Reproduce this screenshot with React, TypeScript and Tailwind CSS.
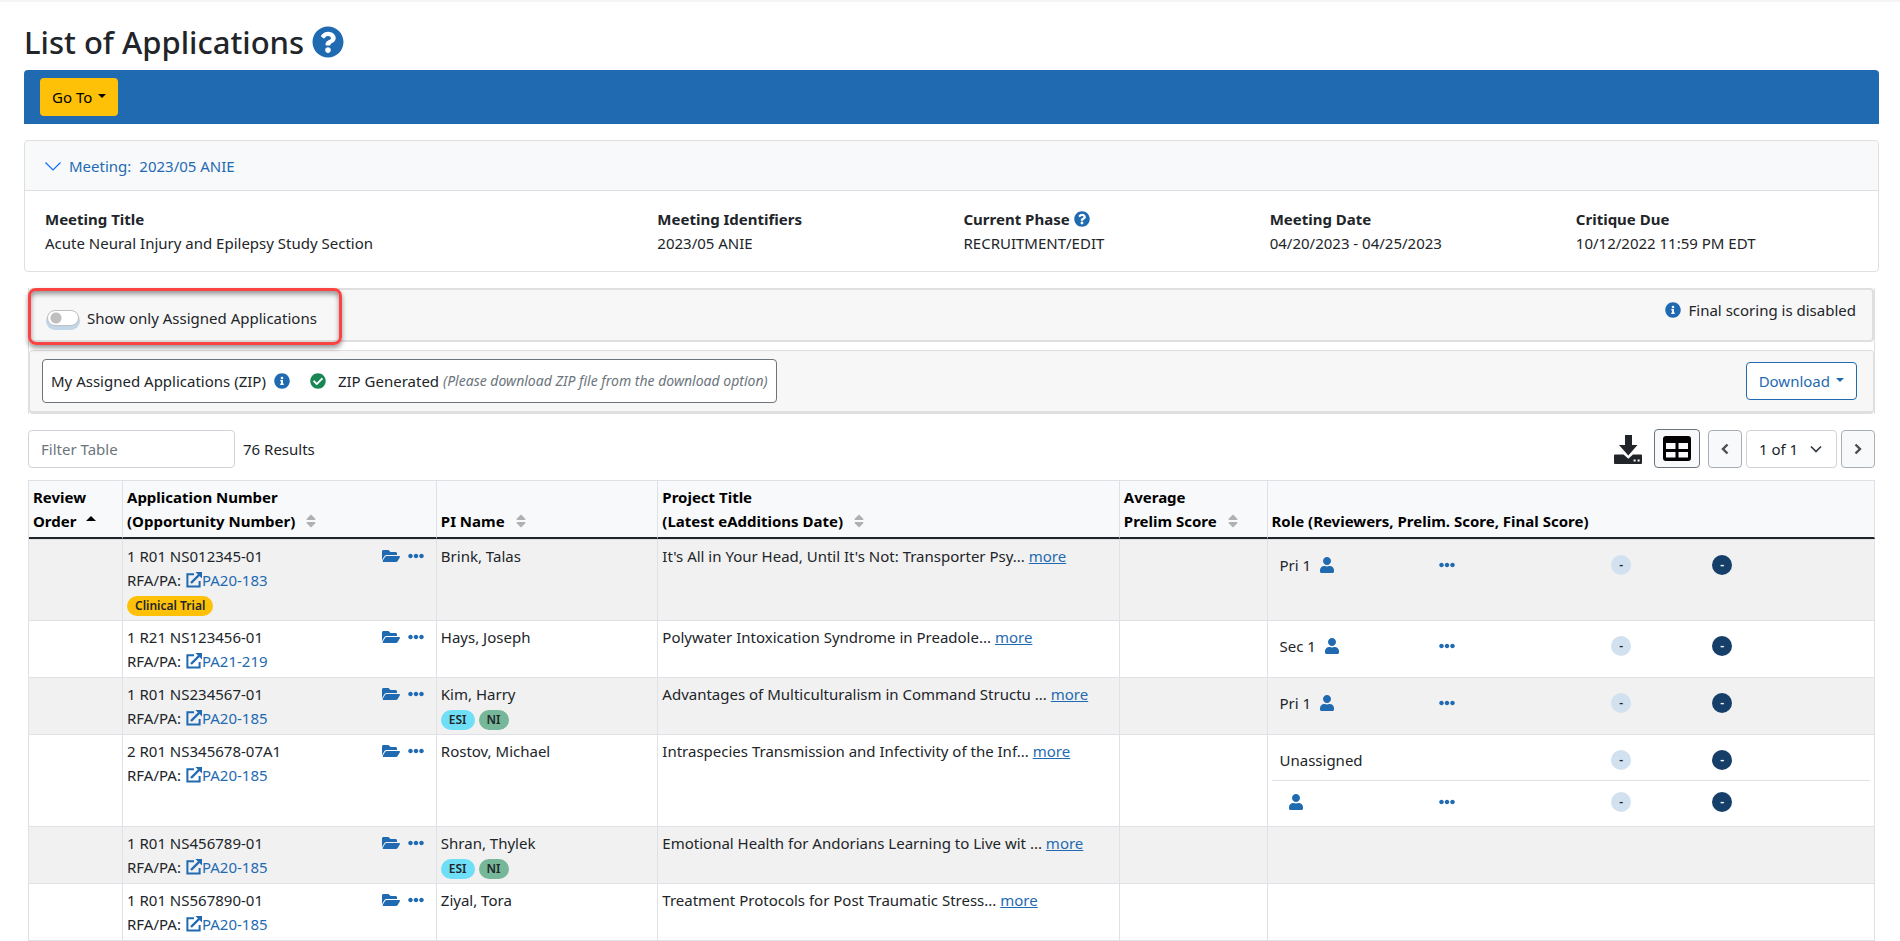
import { useState } from "react";
import { FaCheckCircle, FaEllipsisH, FaFolderOpen, FaInfoCircle, FaQuestionCircle, FaSort, FaUser } from "react-icons/fa";

interface Role {
  label: string;
  person: boolean;
  menu: boolean;
}

interface Application {
  number: string;
  opportunity: string;
  clinicalTrial?: boolean;
  pi: string;
  tags?: boolean;
  title: string;
  roles: Role[];
}

const applications: Application[] = [
  {
    number: "1 R01 NS012345-01",
    opportunity: "PA20-183",
    clinicalTrial: true,
    pi: "Brink, Talas",
    title: "It's All in Your Head, Until It's Not: Transporter Psy...",
    roles: [{ label: "Pri 1", person: true, menu: true }],
  },
  {
    number: "1 R21 NS123456-01",
    opportunity: "PA21-219",
    pi: "Hays, Joseph",
    title: "Polywater Intoxication Syndrome in Preadole...",
    roles: [{ label: "Sec 1", person: true, menu: true }],
  },
  {
    number: "1 R01 NS234567-01",
    opportunity: "PA20-185",
    pi: "Kim, Harry",
    tags: true,
    title: "Advantages of Multiculturalism in Command Structu ...",
    roles: [{ label: "Pri 1", person: true, menu: true }],
  },
  {
    number: "2 R01 NS345678-07A1",
    opportunity: "PA20-185",
    pi: "Rostov, Michael",
    title: "Intraspecies Transmission and Infectivity of the Inf...",
    roles: [
      { label: "Unassigned", person: false, menu: false },
      { label: "", person: true, menu: true },
    ],
  },
  {
    number: "1 R01 NS456789-01",
    opportunity: "PA20-185",
    pi: "Shran, Thylek",
    tags: true,
    title: "Emotional Health for Andorians Learning to Live wit ...",
    roles: [],
  },
  {
    number: "1 R01 NS567890-01",
    opportunity: "PA20-185",
    pi: "Ziyal, Tora",
    title: "Treatment Protocols for Post Traumatic Stress...",
    roles: [],
  },
];

const meetingFields = [
  { label: "Meeting Title", value: "Acute Neural Injury and Epilepsy Study Section", wide: true },
  { label: "Meeting Identifiers", value: "2023/05 ANIE" },
  { label: "Current Phase", value: "RECRUITMENT/EDIT", help: true },
  { label: "Meeting Date", value: "04/20/2023 - 04/25/2023" },
  { label: "Critique Due", value: "10/12/2022 11:59 PM EDT" },
];

const headers = [
  { lines: ["Review", "Order"], sort: "asc", width: "w-[94px]" },
  { lines: ["Application Number", "(Opportunity Number)"], sort: "both", width: "w-[17%]" },
  { lines: ["PI Name"], sort: "both", width: "w-[12%]" },
  { lines: ["Project Title", "(Latest eAdditions Date)"], sort: "both", width: "w-[25%]" },
  { lines: ["Average", "Prelim Score"], sort: "both", width: "w-[8%]" },
  { lines: ["Role (Reviewers, Prelim. Score, Final Score)"], sort: "none", width: "" },
];

function Caret() {
  return <span className="mb-0.5 border-x-4 border-t-4 border-x-transparent border-t-current" />;
}

function ExternalLinkIcon() {
  return (
    <svg viewBox="0 0 16 16" className="size-4 shrink-0" fill="none" stroke="currentColor" aria-hidden="true">
      <path d="M8 2.2H1.4v12.4h12.2V9" strokeWidth="2" />
      <path d="M5 11 13 3" strokeWidth="2.4" />
      <path d="M9.400 0H16v6.600z" fill="currentColor" stroke="none" />
    </svg>
  );
}

function DownloadTrayIcon() {
  return (
    <svg viewBox="0 0 28 29" className="h-[29px] w-7" fill="currentColor" aria-hidden="true">
      <path d="M11 0h7v10h5.5L14.3 20.600 5 10h6z" />
      <path
        fillRule="evenodd"
        d="M1 19.500h8.600l4.700 4.300 4.700-4.300H27a1 1 0 0 1 1 1V28a1 1 0 0 1-1 1H1a1 1 0 0 1-1-1v-7.500a1 1 0 0 1 1-1zM19.600 24.600v2h2v-2zM23.600 24.600v2h2v-2z"
      />
    </svg>
  );
}

function TableIcon() {
  return (
    <svg viewBox="0 0 28 25" className="h-[25px] w-7" aria-hidden="true">
      <path
        fillRule="evenodd"
        d="M3 0h22a3 3 0 0 1 3 3v19a3 3 0 0 1-3 3H3a3 3 0 0 1-3-3V3a3 3 0 0 1 3-3zM3 7v6h9.500V7zM15.500 7v6H25V7zM3 16v5.500h9.500V16zM15.500 16v5.500H25V16z"
      />
    </svg>
  );
}

function PageArrow({ d }: { d: string }) {
  return (
    <svg viewBox="0 0 12 12" className="size-3" fill="none" stroke="currentColor" strokeWidth="2.4" aria-hidden="true">
      <path d={d} />
    </svg>
  );
}

function RoleRow({ role }: { role: Role }) {
  return (
    <div className="grid h-10 grid-cols-[160fr_172fr_101fr_166fr] items-center border-[#dee2e6] not-first:h-[42px] not-first:border-t [&>*]:px-2">
      <div className="flex items-center gap-2">
        {role.label}
        {role.person && (
          <button type="button" aria-label="Reviewer" className={role.label ? "text-[#1f6ab1]" : "ml-2 text-[#1f6ab1]"}>
            <FaUser className="size-4" />
          </button>
        )}
      </div>
      <div className="flex items-center">
        {role.menu && (
          <button type="button" aria-label="Role actions" className="text-[#1f6ab1]">
            <FaEllipsisH className="size-4" />
          </button>
        )}
      </div>
      <div className="flex">
        <span className="flex size-5 items-center justify-center rounded-full bg-[#d2e1ef] text-xs font-semibold">-</span>
      </div>
      <div className="flex">
        <span className="flex size-5 items-center justify-center rounded-full bg-[#153f69] text-xs font-semibold text-white">
          -
        </span>
      </div>
    </div>
  );
}

function ApplicationRow({ app }: { app: Application }) {
  return (
    <tr className="align-top odd:bg-[#f1f1f1] [&:first-child>td]:border-t [&>td]:border-r [&>td]:border-b [&>td]:border-[#dee2e6] [&>td]:p-1">
      <td />
      <td>
        <div className="flex items-center gap-2 pr-2 text-[#1f6ab1]">
          <span className="grow text-[#212529]">{app.number}</span>
          <button type="button" aria-label="Open folder">
            <FaFolderOpen className="h-4 w-[18px]" />
          </button>
          <button type="button" aria-label="Application actions">
            <FaEllipsisH className="size-4" />
          </button>
        </div>
        <div className="flex items-center gap-[5px]">
          RFA/PA:
          <a href="#" className="flex items-center text-[#1f6ab1]">
            <ExternalLinkIcon />
            {app.opportunity}
          </a>
        </div>
        {app.clinicalTrial && (
          <div className="flex h-6 items-end">
            <span className="rounded-full bg-[#ffc107] px-2 text-xs leading-5 font-semibold">Clinical Trial</span>
          </div>
        )}
      </td>
      <td>
        {app.pi}
        {app.tags && (
          <div className="flex h-6 items-end gap-1">
            <span className="rounded-full bg-[#6edff6] px-2 text-xs leading-5 font-semibold">ESI</span>
            <span className="rounded-full bg-[#75b798] px-2 text-xs leading-5 font-semibold">NI</span>
          </div>
        )}
      </td>
      <td>
        {app.title}{" "}
        <a href="#" className="text-[#1f6ab1] underline">
          more
        </a>
      </td>
      <td />
      <td>
        {app.roles.length > 0 && (
          <div className="pt-px">
            {app.roles.map((role, index) => (
              <RoleRow key={index} role={role} />
            ))}
          </div>
        )}
      </td>
    </tr>
  );
}

export default function App() {
  const [assignedOnly, setAssignedOnly] = useState(false);
  const [filter, setFilter] = useState("");

  return (
    <div className="border-t-2 border-[#f5f5f5] bg-white pt-4 pr-[21px] pl-6 font-['Noto_Sans',sans-serif] text-[15px] leading-6 text-[#212529]">
      <h1 className="mb-1 flex h-12 items-center gap-2 text-[31px] font-medium">
        List of Applications
        <button type="button" aria-label="Help" className="text-[#1f6ab1]">
          <FaQuestionCircle className="size-8" />
        </button>
      </h1>

      <nav className="flex rounded-t bg-[#1f6ab1] px-4 py-2">
        <button type="button" className="flex h-[38px] items-center gap-1.5 rounded bg-[#ffc107] px-3 text-black">
          Go To
          <Caret />
        </button>
      </nav>

      <section className="mt-4 rounded border border-[#dfdfdf]">
        <button
          type="button"
          className="flex h-[50px] w-full items-center gap-2 rounded-t border-b border-[#dfdfdf] bg-[#f8f9fb] px-5 text-[#1f6ab1]"
        >
          <svg viewBox="0 0 16 16" className="size-4" fill="none" stroke="#0d6efd" aria-hidden="true">
            <path d="m0.500 4.500 7.500 7.500 7.500-7.500" strokeWidth="1.200" />
          </svg>
          <span className="flex gap-2">
            <span>Meeting:</span>
            <span>2023/05 ANIE</span>
          </span>
        </button>
        <dl className="grid grid-cols-6 px-2 py-4">
          {meetingFields.map((field) => (
            <div key={field.label} className={field.wide ? "col-span-2 px-3" : "px-3"}>
              <dt className="flex items-center gap-1 font-bold">
                {field.label}
                {field.help && <FaQuestionCircle className="size-4 text-[#1f6ab1]" />}
              </dt>
              <dd>{field.value}</dd>
            </div>
          ))}
        </dl>
      </section>

      <main className="mt-4 px-1">
        <div className="border-x border-[#dfdfdf]">
          <div className="relative flex h-[54px] justify-between rounded border-2 border-[#dfdfdf] bg-[#f7f7f7] px-4">
            <label className="flex items-center gap-2 pt-1.5">
              <input
                type="checkbox"
                role="switch"
                checked={assignedOnly}
                onChange={(e) => setAssignedOnly(e.target.checked)}
                className="h-4 w-8 appearance-none rounded-full border border-[#bfbfbf] bg-white bg-[radial-gradient(circle_at_8px_7px,#bfbfbf_5px,transparent_6px)] shadow-[0_3px_0_1px_#c2d6e9] checked:bg-[#1f6ab1]"
              />
              Show only Assigned Applications
            </label>
            <p className="flex h-10 items-center gap-2">
              <FaInfoCircle className="size-4 text-[#1f6ab1]" />
              Final scoring is disabled
            </p>
            <div className="pointer-events-none absolute -top-0.5 -left-[3px] h-[57px] w-[314px] rounded-lg border-3 border-[#fa4343] shadow-[0_3px_5px_rgba(0,0,0,0.4),inset_0_3px_5px_rgba(0,0,0,0.4)]" />
          </div>

          <div className="mt-2 flex items-center justify-between rounded border border-b-3 border-[#dfdfdf] bg-[#f7f7f7] py-2 pr-4 pl-3">
            <div className="flex h-11 items-center rounded border border-[#6c757d] bg-white pr-2 pl-2">
              <span>My Assigned Applications (ZIP)</span>
              <FaInfoCircle className="mr-5 ml-2 size-4 text-[#1f6ab1]" />
              <FaCheckCircle className="mr-3 size-4 text-[#198754]" />
              <span>ZIP Generated</span>
              <em className="ml-1 text-sm text-[#6c757d]">(Please download ZIP file from the download option)</em>
            </div>
            <button
              type="button"
              className="flex h-[38px] items-center gap-1.5 rounded border border-[#1f6ab1] bg-white px-3 text-[#1f6ab1]"
            >
              Download
              <Caret />
            </button>
          </div>
        </div>

        <div className="mt-[15px] mb-3 flex items-end">
          <input
            type="text"
            aria-label="Filter Table"
            placeholder="Filter Table"
            value={filter}
            onChange={(e) => setFilter(e.target.value)}
            className="h-[38px] w-[207px] rounded border border-[#ced4da] px-3 placeholder:text-[#6c757d]"
          />
          <span className="flex h-[38px] grow items-center pl-2">76 Results</span>
          <button type="button" aria-label="Download table" className="mr-3 flex h-[38px] items-center">
            <DownloadTrayIcon />
          </button>
          <button
            type="button"
            aria-label="Table view"
            className="mr-2 flex h-[39px] w-[46px] items-center justify-center rounded border border-[#6c757d] bg-[#f8f9fb]"
          >
            <TableIcon />
          </button>
          <div className="flex gap-1">
            <button
              type="button"
              aria-label="Previous page"
              className="flex h-[38px] w-[34px] items-center justify-center rounded border border-[#a9aeb3] bg-[#f8f9fb] text-[#4d4d4d]"
            >
              <PageArrow d="M8.500 1.500 4 6l4.500 4.500" />
            </button>
            <div className="relative">
              <select
                aria-label="Page"
                className="h-[38px] w-[91px] appearance-none rounded border border-[#ced4da] bg-white pl-3"
              >
                <option>1 of 1</option>
              </select>
              <svg
                viewBox="0 0 12 12"
                className="pointer-events-none absolute top-[13px] right-[15px] size-3"
                fill="none"
                stroke="#343a40"
                aria-hidden="true"
              >
                <path d="m1 3.500 5 5 5-5" strokeWidth="1.700" />
              </svg>
            </div>
            <button
              type="button"
              aria-label="Next page"
              className="flex h-[38px] w-[34px] items-center justify-center rounded border border-[#a9aeb3] bg-[#f8f9fb] text-[#4d4d4d]"
            >
              <PageArrow d="M3.500 1.500 8 6l-4.500 4.500" />
            </button>
          </div>
        </div>

        <table className="w-full table-fixed border-separate border-spacing-0 border-t border-l border-[#dee2e6]">
          <thead>
            <tr className="bg-[#f8f9fb] text-left align-bottom text-black">
              {headers.map((header) => (
                <th
                  key={header.lines[0]}
                  className={`border-r border-b-2 border-r-[#dee2e6] border-b-[#212529] p-1 font-bold ${header.width}`}
                >
                  {header.lines.map((line, i) => (
                    <span key={line} className="flex items-center whitespace-nowrap">
                      {line}
                      {i === header.lines.length - 1 && header.sort === "both" && (
                        <FaSort className="ml-2.5 h-4 w-3 text-[#b0b0b0]" />
                      )}
                      {i === header.lines.length - 1 && header.sort === "asc" && (
                        <span className="mb-1.5 ml-2.5 border-x-5 border-b-5 border-x-transparent border-b-current" />
                      )}
                    </span>
                  ))}
                </th>
              ))}
            </tr>
          </thead>
          <tbody>
            {applications.map((app) => (
              <ApplicationRow key={app.number} app={app} />
            ))}
          </tbody>
        </table>
      </main>
    </div>
  );
}
